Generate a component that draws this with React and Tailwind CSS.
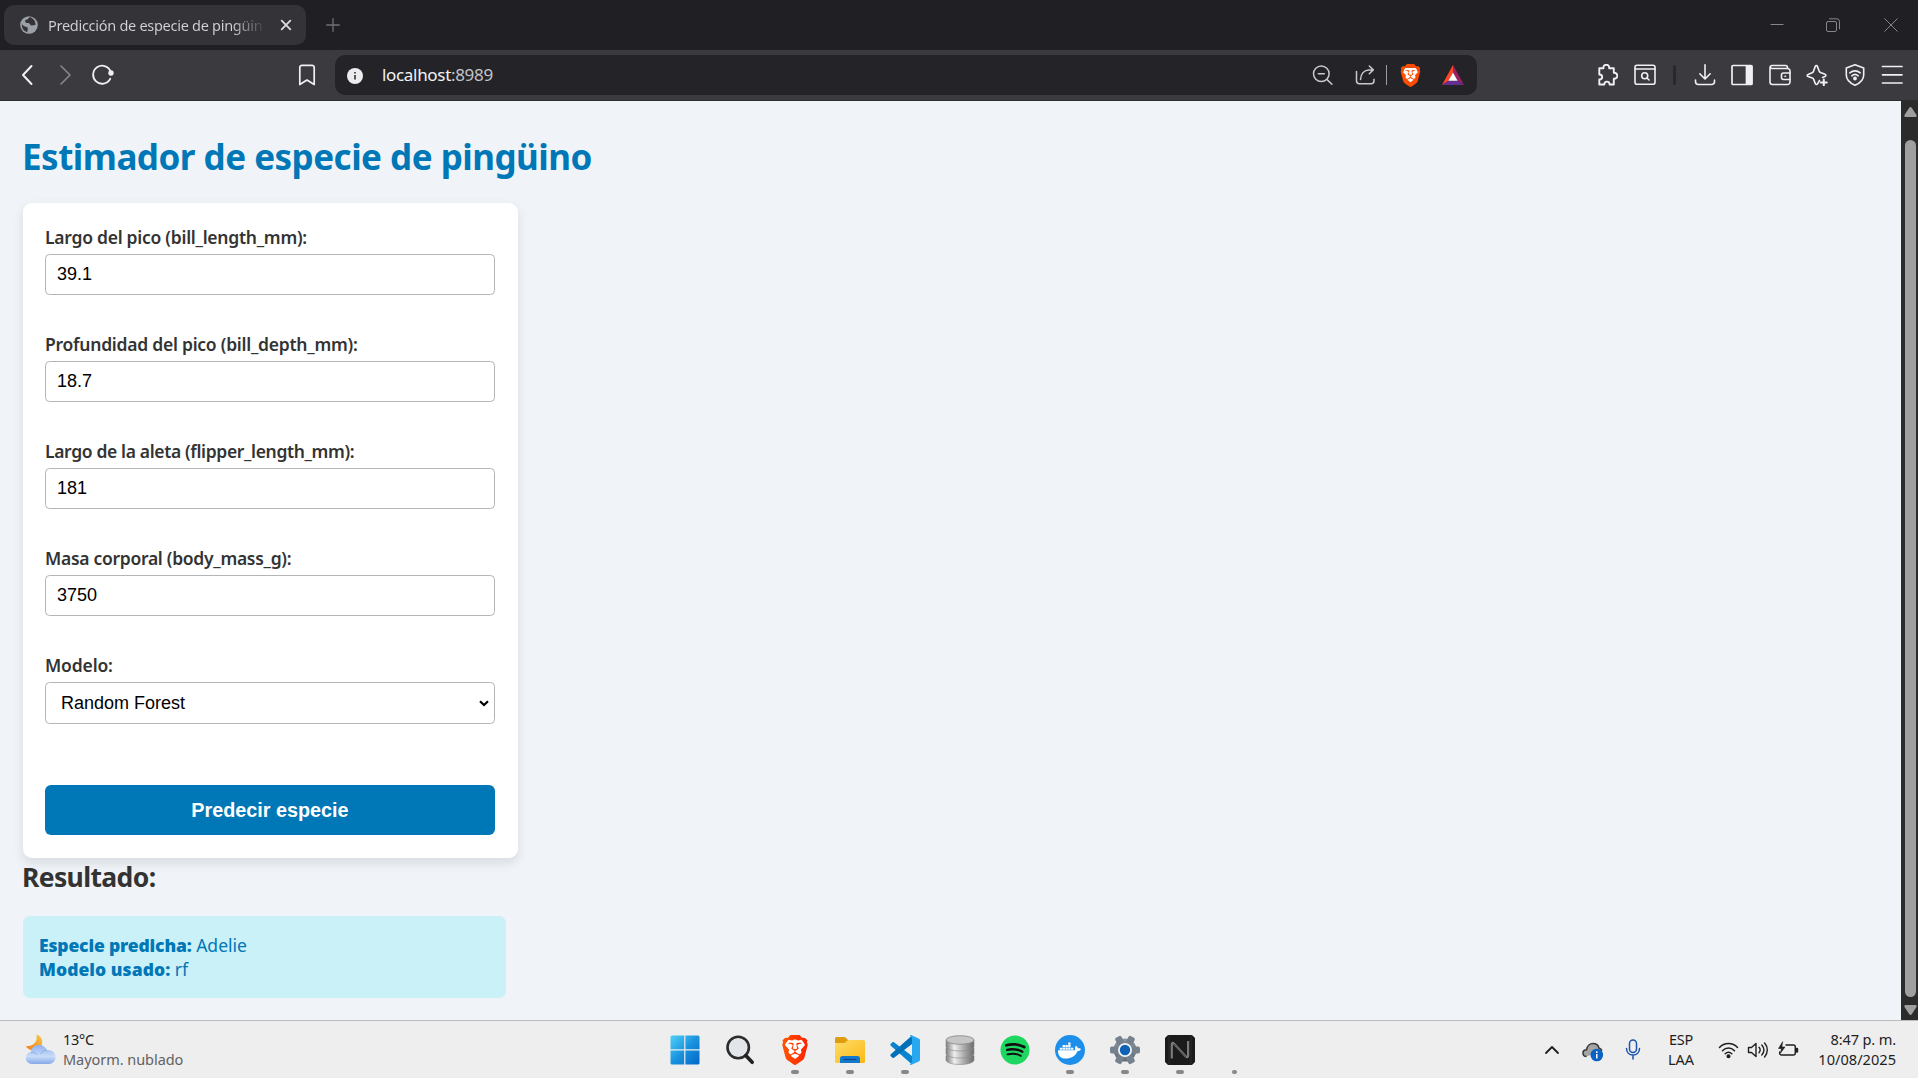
import React from "react";
import { SiBrave } from "react-icons/si";
import { FaSpotify, FaDocker } from "react-icons/fa";

const measurements = [
  { label: "Largo del pico (bill_length_mm):", value: "39.1", tracking: "tracking-[-0.26px]" },
  { label: "Profundidad del pico (bill_depth_mm):", value: "18.7", tracking: "tracking-[-0.25px]" },
  { label: "Largo de la aleta (flipper_length_mm):", value: "181", tracking: "tracking-[-0.35px]" },
  { label: "Masa corporal (body_mass_g):", value: "3750", tracking: "tracking-[-0.29px]" },
];

function Icon({ w = 22, h = 22, children, stroke = "currentColor", sw = 1.6 }) {
  return (
    <svg width={w} height={h} viewBox={`0 0 ${w} ${h}`} fill="none" stroke={stroke} strokeWidth={sw} strokeLinecap="round" strokeLinejoin="round" className="shrink-0">
      {children}
    </svg>
  );
}

function BraveLogo({ size, id, from, to }) {
  return (
    <svg width={size} height={size} viewBox="0 0 24 24" className="shrink-0">
      <defs>
        <linearGradient id={id} x1="0" x2="1">
          <stop offset="0" stopColor={from} />
          <stop offset="1" stopColor={to} />
        </linearGradient>
      </defs>
      <path d="M6 4h12l2 5-3 10-5 3.500-5-3.500L4 9z" fill="#fff" />
      <SiBrave size={24} style={{ fill: `url(#${id})` }} />
    </svg>
  );
}

function TabStrip() {
  return (
    <header className="flex h-[50px] shrink-0 items-center bg-[#202024] pl-1">
      <div className="flex h-10 w-[302px] items-center rounded-[10px] bg-[#343438] pl-4">
        <svg width="18" height="18" viewBox="0 0 18 18" className="shrink-0">
          <circle cx="9" cy="9" r="8.800" fill="#9ca1a8" />
          <path d="M9.500 1.500c-1 .6-1.400 1.800-2.800 2C5.200 3.800 4.500 5 5.500 6.200c.6 1 2 .6 3.200.9 1.200.4 1.200 2 2.500 2.300 1.500.4 2.600-.8 4.300-.4a6.700 6.700 0 0 0-6-7.500zM2 7.500c.2 2 1.600 2.500 3 3 1.300.4 2.600.3 2.800 1.700.2 1.500-.6 2.600-.4 4A7 7 0 0 1 2 7.500z" fill="#343438" />
          <path d="M9.500 1.500c2 .2 3 1.500 2.300 2.800-.6 1-2 .8-2.300 1.700" fill="none" stroke="#343438" />
        </svg>
        <div className="ml-[10px] w-[219px] overflow-hidden bg-gradient-to-r from-[#d3d3d6] from-84% to-[#343438] bg-clip-text text-[14.5px] leading-6 tracking-[-0.28px] whitespace-nowrap text-transparent">
          Predicción de especie de pingüin
        </div>
        <div className="ml-[13px] text-[#dadadd]">
          <Icon w={12} h={12} sw={1.9}><path d="M1.700 1.700l8.600 8.600M10.300 1.700L1.700 10.300" /></Icon>
        </div>
      </div>
      <div className="ml-5 text-[#717175]">
        <Icon w={14} h={14} sw={1.3}><path d="M7 .7v12.600M.7 7h12.600" /></Icon>
      </div>
      <div className="mr-[20px] ml-auto flex items-center text-[#85858a]">
        <Icon w={14} h={14} sw={1}><path d="M.5 6.500h13" strokeLinecap="butt" /></Icon>
        <div className="ml-[42px]">
          <Icon w={14} h={14} sw={1}><rect x=".5" y="3.500" width="10" height="10" rx="1.500" /><path d="M3.500 .8h7.500a2.500 2.500 0 0 1 2.500 2.500v7.500" /></Icon>
        </div>
        <div className="ml-[44px]">
          <Icon w={14} h={14} sw={1}><path d="M.7.700l12.600 12.600M13.300.700L.7 13.300" /></Icon>
        </div>
      </div>
    </header>
  );
}

function AddressBar() {
  return (
    <div className="flex h-10 w-[1142px] items-center rounded-[10px] bg-[#242428] pl-[12px] text-[#c9c9cc]">
      <svg width="16" height="16" viewBox="0 0 16 16" className="mt-0.5 shrink-0">
        <circle cx="8" cy="8" r="8" fill="#ececef" />
        <path d="M8 7v4.500M8 4v1.600" stroke="#3b3b3f" strokeWidth="1.700" />
      </svg>
      <div className="ml-[19px] text-[17px] leading-6 tracking-[-0.32px] text-[#c5c5c9]">
        <span className="text-[#f2f2f4]">localhost</span>:8989
      </div>
      <div className="mr-[13px] ml-auto flex items-center">
        <Icon sw={1.5}><circle cx="9.300" cy="9.800" r="7.800" /><path d="M15.100 15.600l4.800 4.600M6.300 9.800h6" /></Icon>
        <div className="ml-[21px]">
          <Icon sw={1.500}><path d="M1.500 7.500v9.300a3 3 0 0 0 3 3H16a3 3 0 0 0 3-3v-1.500M5.500 15.500c.3-5.500 3.500-9.300 8-9.600H18M14.300 2l4 3.900-4 3.900" /></Icon>
        </div>
        <div className="ml-[9px] h-5 w-px bg-[#9c9c9f]" />
        <div className="ml-[12px]"><BraveLogo size={23} id="shield-bar" from="#ff5000" to="#ff4500" /></div>
        <svg width="22" height="20" viewBox="0 0 22 20" className="ml-[20px]">
          <path d="M11 0L0 20l6.500-4.200L11 7.500z" fill="#ff4724" />
          <path d="M11 0l11 20-6.500-4.200L11 7.500z" fill="#9e1f63" />
          <path d="M0 20h22l-6.500-4.200h-9z" fill="#662d91" />
          <path d="M11 7.500l4.600 8.300H6.400z" fill="#fff" />
        </svg>
      </div>
    </div>
  );
}

function Toolbar() {
  return (
    <div className="flex h-[51px] shrink-0 items-center border-b border-[#2c2c2f] bg-[#3b3a3e] pl-4 text-[#f0f0f2]">
      <Icon sw={2}><path d="M15.500 2L7 11l8.500 9" /></Icon>
      <div className="ml-4 text-[#88888b]"><Icon sw={1.600}><path d="M7 2l9 9-9 9" /></Icon></div>
      <div className="ml-[16px]">
        <Icon sw={1.800}><path d="M18.200 14.800a9 9 0 1 1 .6-6.600" /><circle cx="19" cy="9" r="1.800" fill="currentColor" /></Icon>
      </div>
      <div className="ml-[182px]">
        <Icon sw={1.700}><path d="M3.800 20.500V3.500A2.200 2.200 0 0 1 6 1.300h10a2.200 2.200 0 0 1 2.200 2.200v17L11 16z" /></Icon>
      </div>
      <div className="ml-[17px]"><AddressBar /></div>
      <div className="ml-[119px]">
        <Icon sw={1.900}><path d="M3.300 4.200h4.200c-.3-2 .6-3.400 2.800-3.400s3.100 1.400 2.800 3.400h4.700v4.600c2.200-.1 3.500 1 3.500 3s-1.300 3-3.500 2.900V20.500h-4.200c0-2-1-2.900-2.600-2.900s-2.700.9-2.700 2.900h-5v-5c2 0 2.900-1 2.900-2.500s-.9-2.500-2.900-2.500z" /></Icon>
      </div>
      <div className="ml-[16px]">
        <Icon sw={1.600}><rect x="1" y="1.300" width="20" height="19" rx="2" /><path d="M1 5h20" /><circle cx="10.700" cy="11.800" r="3" /><path d="M13 14l2 2" /></Icon>
      </div>
      <div className="ml-[17px] h-5 w-[3px] rounded bg-[#29292c]" />
      <div className="ml-[18px] flex gap-[15.400px]">
        <Icon sw={1.600}><path d="M11 .8v14M5.800 9.800L11 15l5.200-5.200M1.500 16v1.500a3 3 0 0 0 3 3h13a3 3 0 0 0 3-3V16" /></Icon>
        <Icon sw={1.700}><rect x="1" y="1.500" width="20" height="19" rx="1" /><path d="M15.500 2h5v18h-5z" fill="currentColor" /></Icon>
        <Icon sw={1.600}><path d="M18.500 4.500v-1a2 2 0 0 0-2-2H3a2 2 0 0 0-2 2v14.500a2.500 2.500 0 0 0 2.500 2.500H18.500a2.500 2.500 0 0 0 2.500-2.500V7a2.500 2.500 0 0 0-2.500-2.500H3a2 2 0 0 1-1.800-1.500" /><path d="M21 9h-6.500a2 2 0 0 0-2 2v2.500a2 2 0 0 0 2 2H21M16 12.300h.5" /></Icon>
        <Icon sw={1.600}><path d="M13.500 16.500l-2 3.300a1.200 1.200 0 0 1-2.200-.2l-1.600-4.200a2 2 0 0 0-1.300-1.300L2 12.500a1.100 1.100 0 0 1 0-2.100l4.200-1.700A2.300 2.300 0 0 0 7.500 7.300l1.800-4.900a1.100 1.100 0 0 1 2.100 0l1.700 4.600a2.300 2.300 0 0 0 1.400 1.400l4.600 1.900a1.100 1.100 0 0 1 0 2.100l-2.600 1" /><path d="M17.800 15.500v6M14.800 18.500h6" strokeWidth="2" /></Icon>
        <Icon sw={1.600}><path d="M11 .8l8.700 3.200v7c0 4.500-3.500 8-8.700 10.300C5.800 19 2.300 15.500 2.300 11V4z" /><path d="M5.800 8.800c3-2.600 7.400-2.600 10.400 0M7.800 11.800c2-1.700 4.400-1.700 6.400 0" /><circle cx="11" cy="14.500" r="1.100" fill="currentColor" /></Icon>
        <Icon sw={1.700}><path d="M1.500 2.500h19.500M1.500 10.800h19.500M1.500 19h19.500" /></Icon>
      </div>
    </div>
  );
}

function PredictionForm() {
  return (
    <form className="flex h-[655px] w-[495px] flex-col rounded-[9px] bg-white pt-[22px] pr-[23px] pl-[22px] shadow-[0_4.500px_11px_rgba(0,0,0,0.1)]">
      {measurements.map((m) => (
        <label key={m.label} className="mb-[37px] flex flex-col">
          <span className={`text-[17.5px] leading-6 font-semibold ${m.tracking}`}>{m.label}</span>
          <span className="mt-[5px] flex h-[41px] items-center rounded-[4.5px] border border-[#b5b5b5] pl-[11px] font-['Liberation_Sans',sans-serif] text-[18px] text-black">
            {m.value}
          </span>
        </label>
      ))}
      <label className="flex flex-col">
        <span className="text-[17.5px] leading-6 font-semibold tracking-[-0.15px]">Modelo:</span>
        <span className="mt-[5px] flex h-[42px] items-center justify-between rounded-[4.5px] border border-[#b5b5b5] pr-1 pl-[15px] font-['Liberation_Sans',sans-serif] text-[18px] text-black">
          Random Forest
          <Icon w={12} h={8} sw={2.2}><path d="M2 2.200l4 3.800 4-3.800" strokeLinecap="butt" strokeLinejoin="miter" /></Icon>
        </span>
      </label>
      <button type="button" className="mt-[61px] h-[50px] w-full rounded-[6px] bg-[#0077b6] pt-0.5 font-['Liberation_Sans',sans-serif] text-[19.8px] font-bold text-white">
        Predecir especie
      </button>
    </form>
  );
}

function Page() {
  return (
    <main className="flex-1 bg-[#f0f4f8] pl-[23px] text-[#333]">
      <h1 className="mt-[32px] mb-[22px] -ml-px text-[35px] leading-[48px] font-bold tracking-[-0.51px] text-[#0077b6]">Estimador de especie de pingüino</h1>
      <PredictionForm />
      <h2 className="-ml-px pt-px text-[26.5px] leading-9 font-bold tracking-[-0.63px]">Resultado:</h2>
      <section className="mt-[21px] h-[82px] w-[483px] rounded-[7px] bg-[#caf0f8] pt-[17px] pl-4 text-[17.5px] leading-6 text-[#0077b6]">
        <p><strong className="font-black tracking-[-0.15px]">Especie predicha:</strong> Adelie</p>
        <p><strong className="font-black tracking-[0.05px]">Modelo usado:</strong> rf</p>
      </section>
    </main>
  );
}

function Scrollbar() {
  return (
    <div className="flex w-[17px] flex-col items-center bg-[#2b2b2b] pl-0.5">
      <svg width="13" height="10" viewBox="0 0 13 10" className="mt-[6px]" fill="#9f9f9f"><path d="M6.500 0c.6 0 1 .4 1.400 1L12.500 8c.5 1 0 2-1 2h-10c-1 0-1.500-1-1-2L5.100 1c.4-.6.8-1 1.400-1z" /></svg>
      <div className="mt-[23px] h-[857px] w-[11px] rounded-full bg-[#9f9f9f]" />
      <svg width="13" height="10" viewBox="0 0 13 10" className="mt-[8px]" fill="#9f9f9f"><path d="M6.500 10c.6 0 1-.4 1.400-1L12.500 2c.5-1 0-2-1-2h-10c-1 0-1.500 1-1 2L5.100 9c.4.600.8 1 1.400 1z" /></svg>
    </div>
  );
}

function WeatherIcon() {
  return (
    <svg width="31" height="31" viewBox="0 0 31 31">
      <defs>
        <linearGradient id="moon" x1="1" y1="0" x2="0" y2="1"><stop offset="0" stopColor="#f7c948" /><stop offset="1" stopColor="#ef7d1a" /></linearGradient>
        <linearGradient id="cloud" x1="0" y1="0" x2="0" y2="1"><stop offset="0" stopColor="#8fb0ee" /><stop offset=".6" stopColor="#c9dcf8" /><stop offset="1" stopColor="#86a8ea" /></linearGradient>
      </defs>
      <path d="M11.500.5c5 1.800 7 6.500 5 11C14 16.500 5 18.500.8 12.200 8 12.500 13 8 11.500.5z" fill="url(#moon)" />
      <path d="M6.500 30a6 6 0 0 1-.8-11.900C6.500 13.500 10 11 14 11c3.800 0 6.600 2 8 5 4.500-.6 8.500 2.500 8.500 7 0 4-3 7-6.500 7z" fill="url(#cloud)" />
      <path d="M6 18.500c3-.5 5 .5 6 2.500M22 16c-3 .2-5 1.800-6.500 4" fill="none" stroke="#7a9fe6" strokeWidth="1" opacity=".7" />
    </svg>
  );
}

function WindowsIcon() {
  return (
    <svg width="30" height="30" viewBox="0 0 30 30">
      <defs><linearGradient id="win" x1="0" y1="0" x2="1" y2="1"><stop offset="0" stopColor="#50d0fb" /><stop offset=".5" stopColor="#1a93dd" /><stop offset="1" stopColor="#0067c8" /></linearGradient></defs>
      <path d="M2 .5h12.200v13.700H.5V2A1.500 1.500 0 0 1 2 .5zM15.400.5H28A1.500 1.500 0 0 1 29.500 2v12.200H15.400zM.5 15.400h13.700v14.100H2A1.500 1.500 0 0 1 .5 28zM15.400 15.400h14.100V28a1.500 1.500 0 0 1-1.500 1.500H15.400z" fill="url(#win)" />
    </svg>
  );
}

function SearchIcon() {
  return (
    <svg width="30" height="30" viewBox="0 0 30 30" fill="none">
      <circle cx="13.200" cy="12.500" r="10.700" fill="#e2e5e9" stroke="#2b2b2b" strokeWidth="2.600" />
      <path d="M20.800 20.500l6.400 6.800" stroke="#222" strokeWidth="3.600" strokeLinecap="round" />
    </svg>
  );
}

function ExplorerIcon() {
  return (
    <svg width="30" height="30" viewBox="0 0 30 30">
      <defs><linearGradient id="folder" x1="0" y1="0" x2="1" y2="1"><stop offset="0" stopColor="#ffdc6a" /><stop offset="1" stopColor="#fbb912" /></linearGradient></defs>
      <path d="M0 3.500A1.500 1.500 0 0 1 1.500 2H9c.8 0 1.300.3 1.800.8L13 5v4H0z" fill="#dd9d0d" />
      <path d="M0 8h8.500c1 0 1.700-.3 2.400-1L13 5h15.500A1.500 1.500 0 0 1 30 6.500v20a1.500 1.500 0 0 1-1.500 1.500h-27A1.500 1.500 0 0 1 0 26.500z" fill="url(#folder)" />
      <path d="M5 28v-4.500A2.500 2.500 0 0 1 7.500 21h15a2.500 2.500 0 0 1 2.500 2.500V28z" fill="#1479cc" />
      <path d="M8.500 24.500h13" stroke="#0a4a8c" strokeWidth="1.200" />
    </svg>
  );
}

function VsCodeIcon() {
  return (
    <svg width="30" height="30" viewBox="0 0 30 30">
      <path d="M22 29.500L.8 10.700c-.6-.5-.6-1.400 0-2l1.400-1.300c.5-.5 1.200-.5 1.800-.1L22 21z" fill="#0a84cc" />
      <path d="M22 .5L.8 19.300c-.6.5-.6 1.400 0 2l1.400 1.300c.5.500 1.200.5 1.800.1L22 9z" fill="#0070b8" />
      <path d="M21.500.2L28.700 3.600A2.200 2.200 0 0 1 30 5.600v18.800c0 .9-.5 1.600-1.300 2l-7.200 3.400c-.6.200-1.300 0-1.700-.5L22 27V3L19.800.7c.4-.5 1-.7 1.700-.5z" fill="#27a8f0" />
    </svg>
  );
}

function DatabaseIcon() {
  return (
    <svg width="30" height="30" viewBox="0 0 30 30">
      <defs><linearGradient id="db"><stop offset="0" stopColor="#7d7d7d" /><stop offset=".3" stopColor="#efefef" /><stop offset=".65" stopColor="#a9a9a9" /><stop offset="1" stopColor="#6c6c6c" /></linearGradient></defs>
      <g fill="url(#db)" stroke="#8a8a8a" strokeWidth=".6">
        <path d="M1 20.500h28v4.500c0 2.500-6 4.500-14 4.500S1 27.500 1 25z" />
        <path d="M1 13h28v5.500c0 2.500-6 4.500-14 4.500S1 21 1 18.500z" />
        <path d="M1 5h28v6.500c0 2.500-6 4.500-14 4.500S1 14 1 11.500z" />
      </g>
      <ellipse cx="15" cy="5" rx="14" ry="4.300" fill="#c6c6c6" stroke="#858585" strokeWidth=".8" />
    </svg>
  );
}

function SpotifyIcon() {
  return (
    <div className="flex size-[30px] items-center justify-center rounded-full bg-[radial-gradient(#101010_60%,transparent_61%)]">
      <FaSpotify size={30} color="#1ed760" />
    </div>
  );
}

function DockerIcon() {
  return (
    <div className="flex size-[30px] items-center justify-center rounded-full bg-[#1d8fea] text-white">
      <FaDocker size={23} />
    </div>
  );
}

function SettingsIcon() {
  return (
    <svg width="30" height="30" viewBox="0 0 30 30">
      <defs><linearGradient id="gear" x1="0" y1="0" x2="0" y2="1"><stop offset="0" stopColor="#8d98a2" /><stop offset="1" stopColor="#5f6b76" /></linearGradient></defs>
      <g fill="#75818c">
        <circle cx="15" cy="15" r="11.500" fill="url(#gear)" />
        {[30, 90, 150].map((a) => (
          <rect key={a} x="11.500" y="0" width="7" height="30" rx="1.800" transform={`rotate(${a} 15 15)`} />
        ))}
      </g>
      <circle cx="15" cy="15" r="7" fill="#f3f4f6" />
      <circle cx="15" cy="15" r="5.200" fill="#0f62b5" />
    </svg>
  );
}

function NotesIcon() {
  return (
    <svg width="30" height="30" viewBox="0 0 30 30">
      <path d="M3 0h24l3 3v24l-3 3H3l-3-3V3z" fill="#1b1b1b" />
      <path d="M4 0v30M26 0v30" stroke="#2c2c2c" />
      <path d="M6.800 22.500V9.500c0-1.700 1-2 2-1l12 13c1.200 1.200 2.300.8 2.300-.8V7" fill="none" stroke="#7b7b7b" strokeWidth="2.200" strokeLinecap="square" />
      <path d="M9 9l12 13" stroke="#4a4a4a" strokeWidth="1" />
    </svg>
  );
}

const apps = [
  { name: "windows", icon: <WindowsIcon /> },
  { name: "search", icon: <SearchIcon /> },
  { name: "brave", icon: <BraveLogo size={30} id="shield-task" from="#ff5500" to="#ff2000" />, mark: "w-2" },
  { name: "explorer", icon: <ExplorerIcon />, mark: "w-2" },
  { name: "vscode", icon: <VsCodeIcon />, mark: "w-2" },
  { name: "database", icon: <DatabaseIcon /> },
  { name: "spotify", icon: <SpotifyIcon /> },
  { name: "docker", icon: <DockerIcon />, mark: "w-2" },
  { name: "settings", icon: <SettingsIcon />, mark: "w-2" },
  { name: "notes", icon: <NotesIcon />, mark: "w-2" },
  { name: "blank", icon: null, mark: "w-[5px]" },
];

function SystemTray() {
  return (
    <div className="mr-[22px] flex items-center text-[#1f1f1f]">
      <Icon w={16} h={10} sw={1.800}><path d="M2 8l6-6 6 6" /></Icon>
      <svg width="22" height="20" viewBox="0 0 22 20" className="mt-1 ml-[22px]">
        <path d="M4.500 14.500C2 14.500 1 12.800 1 11.200 1 9 2.800 7.800 4.500 7.800 5 4 7.800 1.500 11 1.500c3 0 5.300 1.700 6 4.500 1.500.4 2.500 1.500 2.800 3" fill="#a5a5a5" stroke="#3a3a3a" strokeWidth="1.600" />
        <circle cx="14.800" cy="13" r="6.300" fill="#0a63c2" />
        <path d="M14.800 12v4.500M14.800 9.300V11" stroke="#fff" strokeWidth="1.500" />
      </svg>
      <div className="ml-[21px] text-[#1d52ad]">
        <Icon w={16} h={21} sw={1.500}><rect x="4.500" y="1" width="7" height="12.500" rx="3.500" /><path d="M1.500 9.500c0 4 2.800 6.500 6.500 6.500s6.500-2.500 6.500-6.500M8 16v4" /></Icon>
      </div>
      <div className="ml-[22px] w-[36px] pb-0.5 text-center text-[14.5px] leading-5"><p className="tracking-[-0.2px]">ESP</p><p>LAA</p></div>
      <div className="ml-[19px] flex items-center gap-2">
        <Icon w={21} h={18} sw={1.500}><path d="M1.500 6.500c5-5.300 13-5.300 18 0M4.500 9.800c3.500-3.600 8.500-3.600 12 0M7.200 12.800c2-2 4.600-2 6.600 0" /><circle cx="10.500" cy="15.300" r="1.300" fill="currentColor" /></Icon>
        <Icon w={22} h={18} sw={1.400}><path d="M1.500 6.500v5h3l4.500 4V2.500l-4.500 4zM12 6.300c1.300 1.500 1.300 3.900 0 5.400M14.800 4c2.600 3 2.600 7 0 10M17.600 2c3.600 4 3.600 10 0 14" /></Icon>
        <Icon w={22} h={18} sw={1.500}><path d="M9 4h7.500A1.800 1.800 0 0 1 18.300 5.800v6.400A1.800 1.800 0 0 1 16.500 14h-12a1.800 1.800 0 0 1-1.800-1.800V11" /><path d="M20 8v2.500" strokeWidth="2.400" /><path d="M5.500 1L1.500 7.500h3L3.500 12l4.500-6H5z" fill="currentColor" strokeWidth=".6" /></Icon>
      </div>
      <div className="ml-[13px] w-[84px] pb-0.5 text-right text-[14.6px] leading-5 whitespace-nowrap"><p className="tracking-[-0.15px]">8:47 p. m.</p><p>10/08/2025</p></div>
    </div>
  );
}

function Taskbar() {
  return (
    <footer className="grid h-[58px] shrink-0 grid-cols-[657px_605px_1fr] border-t border-[#bcbcbf] bg-[#eeeeee]">
      <div className="flex items-center pl-[25px]">
        <WeatherIcon />
        <div className="ml-[7px] pb-0.5 text-[14.5px] leading-5"><p className="tracking-[-0.3px] text-[#1c1c1c]">13°C</p><p className="tracking-[-0.05px] text-[#626262]">Mayorm. nublado</p></div>
      </div>
      <div className="flex">
        {apps.map((a) => (
          <div key={a.name} className="flex w-[55px] flex-col items-center pt-[14px]">
            <div className="size-[30px]">{a.icon}</div>
            {a.mark && <div className={`mt-[5px] h-1 rounded-full bg-[#878787] ${a.mark}`} />}
          </div>
        ))}
      </div>
      <div className="flex items-center justify-end"><SystemTray /></div>
    </footer>
  );
}

export default function App() {
  return (
    <div className="flex h-[1078px] w-[1918px] flex-col overflow-hidden font-['Noto_Sans',sans-serif]">
      <TabStrip />
      <Toolbar />
      <div className="flex h-[919px] shrink-0">
        <Page />
        <Scrollbar />
      </div>
      <Taskbar />
    </div>
  );
}
